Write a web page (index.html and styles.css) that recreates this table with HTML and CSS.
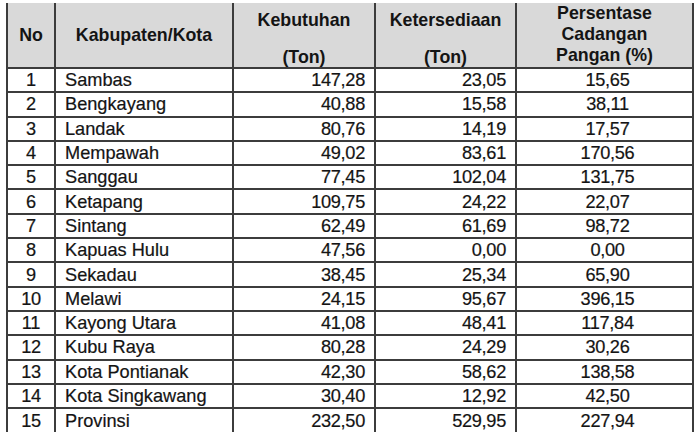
FILE: index.html
```html
<!DOCTYPE html>
<html>
<head>
<meta charset="utf-8">
<link rel="stylesheet" href="styles.css">
</head>
<body>
<div class="wrap">
<table class="data">
  <colgroup>
    <col class="c-no"><col class="c-name"><col class="c-keb"><col class="c-ket"><col class="c-pct">
  </colgroup>
  <thead>
    <tr>
      <th class="h-one">No</th>
      <th class="h-one">Kabupaten/Kota</th>
      <th><div class="h-two"><span>Kebutuhan</span><span>(Ton)</span></div></th>
      <th><div class="h-two"><span>Ketersediaan</span><span>(Ton)</span></div></th>
      <th><div class="h-three"><span>Persentase</span><span>Cadangan</span><span>Pangan (%)</span></div></th>
    </tr>
  </thead>
  <tbody>
    <tr><td class="no">1</td><td class="name">Sambas</td><td class="num">147,28</td><td class="num">23,05</td><td class="pct">15,65</td></tr>
    <tr><td class="no">2</td><td class="name">Bengkayang</td><td class="num">40,88</td><td class="num">15,58</td><td class="pct">38,11</td></tr>
    <tr><td class="no">3</td><td class="name">Landak</td><td class="num">80,76</td><td class="num">14,19</td><td class="pct">17,57</td></tr>
    <tr><td class="no">4</td><td class="name">Mempawah</td><td class="num">49,02</td><td class="num">83,61</td><td class="pct">170,56</td></tr>
    <tr><td class="no">5</td><td class="name">Sanggau</td><td class="num">77,45</td><td class="num">102,04</td><td class="pct">131,75</td></tr>
    <tr><td class="no">6</td><td class="name">Ketapang</td><td class="num">109,75</td><td class="num">24,22</td><td class="pct">22,07</td></tr>
    <tr><td class="no">7</td><td class="name">Sintang</td><td class="num">62,49</td><td class="num">61,69</td><td class="pct">98,72</td></tr>
    <tr><td class="no">8</td><td class="name">Kapuas Hulu</td><td class="num">47,56</td><td class="num">0,00</td><td class="pct">0,00</td></tr>
    <tr><td class="no">9</td><td class="name">Sekadau</td><td class="num">38,45</td><td class="num">25,34</td><td class="pct">65,90</td></tr>
    <tr><td class="no">10</td><td class="name">Melawi</td><td class="num">24,15</td><td class="num">95,67</td><td class="pct">396,15</td></tr>
    <tr><td class="no">11</td><td class="name">Kayong Utara</td><td class="num">41,08</td><td class="num">48,41</td><td class="pct">117,84</td></tr>
    <tr><td class="no">12</td><td class="name">Kubu Raya</td><td class="num">80,28</td><td class="num">24,29</td><td class="pct">30,26</td></tr>
    <tr><td class="no">13</td><td class="name">Kota Pontianak</td><td class="num">42,30</td><td class="num">58,62</td><td class="pct">138,58</td></tr>
    <tr><td class="no">14</td><td class="name">Kota Singkawang</td><td class="num">30,40</td><td class="num">12,92</td><td class="pct">42,50</td></tr>
    <tr class="last"><td class="no">15</td><td class="name">Provinsi</td><td class="num">232,50</td><td class="num">529,95</td><td class="pct">227,94</td></tr>
  </tbody>
</table>
</div>
</body>
</html>
```

FILE: styles.css
```css
html, body {
  margin: 0;
  padding: 0;
  background: #ffffff;
  overflow: hidden;
}
.wrap {
  padding: 3px 0 0 6px;
  height: 434px;
  overflow: hidden;
}
.data {
  border-collapse: collapse;
  table-layout: fixed;
  width: 688px;
  font-family: "Liberation Sans", Arial, sans-serif;
  font-size: 18.2px;
  color: #141414;
  -webkit-text-stroke: 0.2px #141414;
}
.c-no { width: 48px; }
.c-name { width: 178px; }
.c-keb { width: 142px; }
.c-ket { width: 141px; }
.c-pct { width: 177px; }

.data th, .data td {
  border: 2px solid #3c3c3c;
  padding: 0;
}
.data thead tr {
  height: 64px;
}
.data th {
  background: #d9d9d9;
  font-weight: bold;
  font-size: 17.8px;
  vertical-align: top;
  border-top: none;
  -webkit-text-stroke: 0;
}
.data th.h-one {
  vertical-align: middle;
}
.h-two {
  display: flex;
  flex-direction: column;
  justify-content: space-between;
  box-sizing: border-box;
  height: 64px;
  padding-top: 7px;
  line-height: 20px;
}
.h-three {
  display: flex;
  flex-direction: column;
  justify-content: space-between;
  height: 62px;
  line-height: 20.5px;
}
.data tbody tr {
  height: 24.3px;
}
.data tbody tr.last td {
  border-bottom: none;
}
.data td {
  line-height: 20px;
}
.no {
  text-align: center;
  letter-spacing: -0.3px;
}
.name {
  text-align: left;
  padding-left: 9px !important;
}
.num {
  text-align: right;
  padding-right: 9px !important;
  letter-spacing: -0.3px;
}
.pct {
  text-align: center;
  padding-left: 6px !important;
  letter-spacing: -0.3px;
}
```
